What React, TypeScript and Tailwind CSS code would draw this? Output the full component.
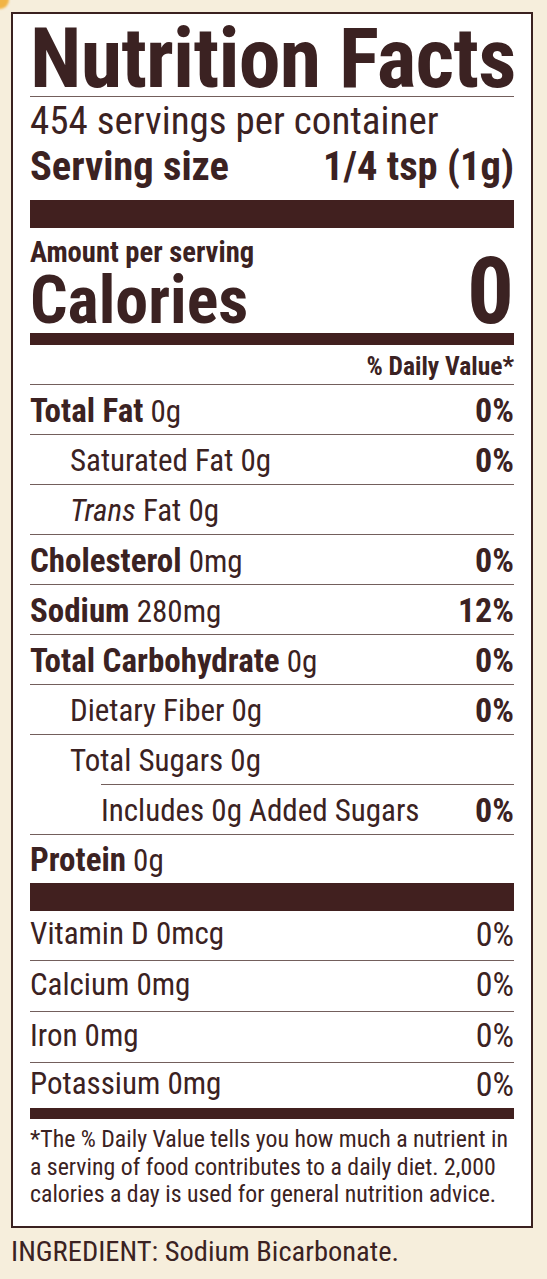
import React from "react";

type Nut = {
  b?: string;
  i?: string;
  r: string;
  pct?: string;
  indent?: 0 | 1 | 2;
  lineIndent?: boolean;
};

const nutrients: Nut[] = [
  { b: "Total Fat", r: " 0g", pct: "0%" },
  { r: "Saturated Fat 0g", pct: "0%", indent: 1 },
  { i: "Trans", r: " Fat 0g", indent: 1 },
  { b: "Cholesterol", r: " 0mg", pct: "0%" },
  { b: "Sodium", r: " 280mg", pct: "12%" },
  { b: "Total Carbohydrate", r: " 0g", pct: "0%" },
  { r: "Dietary Fiber 0g", pct: "0%", indent: 1 },
  { r: "Total Sugars 0g", indent: 1, lineIndent: true },
  { r: "Includes 0g Added Sugars", pct: "0%", indent: 2 },
];

const vitamins = [
  { r: "Vitamin D 0mcg", pct: "0%", h: "h-[50px]", line: true },
  { r: "Calcium 0mg", pct: "0%", h: "h-[51px]", line: true },
  { r: "Iron 0mg", pct: "0%", h: "h-[51px]", line: true },
  { r: "Potassium 0mg", pct: "0%", h: "h-[45px]", line: false },
];

function NutRow({ n }: { n: Nut }) {
  const indentCls =
    n.indent === 2 ? "pl-[71px]" : n.indent === 1 ? "pl-[40px]" : "pl-0";
  return (
    <div className="h-[50px] shrink-0 flex flex-col">
      <div
        className={`flex-1 flex items-center justify-between leading-none pt-[1px] ${indentCls}`}
      >
        <span className="whitespace-pre">
          {n.b && <span className="font-bold text-[33px]">{n.b}</span>}
          {n.i && <span className="italic text-[31px]">{n.i}</span>}
          <span className="text-[31px]">{n.r}</span>
        </span>
        {n.pct && <span className="font-bold text-[34px]">{n.pct}</span>}
      </div>
      <div
        className={`h-px bg-[#735f5c] ${n.lineIndent ? "ml-[71px]" : "ml-0"}`}
      />
    </div>
  );
}

export default function App() {
  return (
    <div className="relative w-[547px] h-[1279px] overflow-hidden bg-[#f6eedc] pt-[12px] pl-[11px] font-['Liberation_Sans_Narrow','Arial_Narrow','Roboto_Condensed','DejaVu_Sans_Condensed',sans-serif] text-[#3b2222]">
      <div className="absolute -left-[9px] -top-[9px] w-[18px] h-[18px] rounded-full bg-[#f1b445] blur-[1px]" />
      <div className="w-[522px] h-[1216px] border-2 border-[#3a2120] bg-white px-[17px] flex flex-col">
        {/* Title */}
        <div className="h-[82px] shrink-0 pt-[10px] text-[84px] font-bold leading-[70px] whitespace-nowrap tracking-[-0.8px]">
          Nutrition Facts
        </div>
        <div className="h-px shrink-0 bg-[#735f5c]" />
        <div className="h-[48px] shrink-0 flex items-center text-[39px] leading-none whitespace-nowrap">
          454 servings per container
        </div>
        <div className="h-[42px] shrink-0 flex items-center justify-between text-[40.5px] font-bold leading-none whitespace-nowrap">
          <span>Serving size</span>
          <span>1/4 tsp (1g)</span>
        </div>
        <div className="mt-[13px] h-[28px] shrink-0 bg-[#41201f]" />
        <div className="h-[36px] shrink-0 flex items-end text-[28.6px] font-bold leading-none">
          <span className="-mb-[3px]">Amount per serving</span>
        </div>
        <div className="h-[69px] shrink-0 flex items-end justify-between font-bold">
          <span className="text-[66px] leading-[48px] mb-[8px]">Calories</span>
          <span className="text-[93px] leading-none -mb-[5px]">0</span>
        </div>
        <div className="h-[12px] shrink-0 bg-[#41201f]" />
        <div className="h-[40px] shrink-0 flex flex-col">
          <div className="flex-1 flex items-center justify-end pt-[5px] text-[25.5px] font-bold leading-none">
            % Daily Value*
          </div>
          <div className="h-px bg-[#735f5c]" />
        </div>
        {nutrients.map((n, idx) => (
          <NutRow key={idx} n={n} />
        ))}
        <div className="h-[48px] shrink-0 flex items-center leading-none pt-[1px]">
          <span>
            <span className="font-bold text-[33px]">Protein</span>
            <span className="text-[31px]"> 0g</span>
          </span>
        </div>
        <div className="h-[28px] shrink-0 bg-[#41201f]" />
        {vitamins.map((v, idx) => (
          <div key={idx} className={`${v.h} shrink-0 flex flex-col`}>
            <div className="flex-1 flex items-center justify-between leading-none pb-[4px]">
              <span className="text-[31px]">{v.r}</span>
              <span className="text-[34px]">{v.pct}</span>
            </div>
            {v.line && <div className="h-px bg-[#735f5c]" />}
          </div>
        ))}
        <div className="h-[11px] shrink-0 bg-[#41201f]" />
        <div className="pt-[7px] text-[23.8px] leading-[27.7px] whitespace-nowrap">
          *The % Daily Value tells you how much a nutrient in
          <br />
          a serving of food contributes to a daily diet. 2,000
          <br />
          calories a day is used for general nutrition advice.
        </div>
      </div>
      <div className="mt-[10px] text-[28.5px] leading-none whitespace-nowrap">
        INGREDIENT: Sodium Bicarbonate.
      </div>
    </div>
  );
}
